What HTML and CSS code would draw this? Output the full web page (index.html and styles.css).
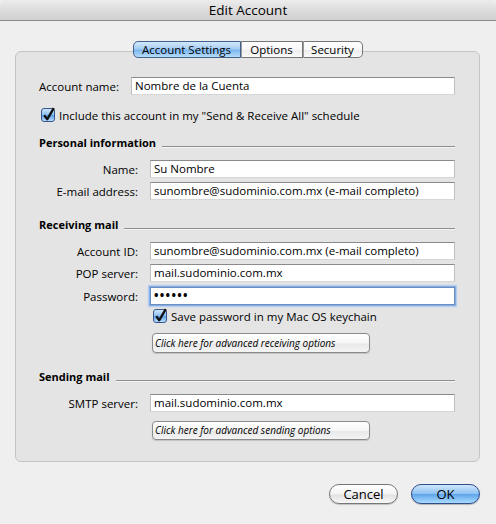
FILE: index.html
```html
<!DOCTYPE html>
<html>
<head>
<meta charset="utf-8">
<link rel="stylesheet" href="styles.css">
</head>
<body>
<div class="window">
  <div class="titlebar">Edit Account</div>
  <div class="content">
    <div class="tabs">
      <span class="tab tab-sel tab-first w1">Account Settings</span>
      <span class="tab w2">Options</span>
      <span class="tab tab-last w3">Security</span>
    </div>
    <div class="group">
      <div class="row">
        <span class="lbl lbl-narrow">Account name:</span>
        <span class="field">Nombre de la Cuenta</span>
      </div>
      <div class="check-row incl">
        <svg class="cb" width="14" height="14" viewBox="0 0 14 14"><defs><linearGradient id="cbg1" x1="0" y1="0" x2="0" y2="1"><stop offset="0" stop-color="#d4e9fc"/><stop offset=".48" stop-color="#8cbff0"/><stop offset=".52" stop-color="#5b9fe6"/><stop offset="1" stop-color="#c2e4ff"/></linearGradient></defs><rect x=".5" y=".5" width="13" height="13" rx="2.5" fill="url(#cbg1)" stroke="#34578f"/><path d="M3.2 7.2 L6.3 11.2 L12.8 0.2" fill="none" stroke="#111" stroke-width="2.3" stroke-linejoin="round"/></svg>
        <span>Include this account in my "Send &amp; Receive All" schedule</span>
      </div>
      <div class="heading h-personal"><span class="htext">Personal information</span><span class="rule"></span></div>
      <div class="row r-first">
        <span class="lbl">Name:</span>
        <span class="field">Su Nombre</span>
      </div>
      <div class="row r-next">
        <span class="lbl">E-mail address:</span>
        <span class="field">sunombre@sudominio.com.mx (e-mail completo)</span>
      </div>
      <div class="heading h-recv"><span class="htext">Receiving mail</span><span class="rule"></span></div>
      <div class="row r-first">
        <span class="lbl">Account ID:</span>
        <span class="field">sunombre@sudominio.com.mx (e-mail completo)</span>
      </div>
      <div class="row r-next">
        <span class="lbl">POP server:</span>
        <span class="field">mail.sudominio.com.mx</span>
      </div>
      <div class="row r-pass">
        <span class="lbl">Password:</span>
        <span class="field field-focus"><span class="dots">&#8226;&#8226;&#8226;&#8226;&#8226;&#8226;</span></span>
      </div>
      <div class="check-row save">
        <svg class="cb" width="14" height="14" viewBox="0 0 14 14"><defs><linearGradient id="cbg2" x1="0" y1="0" x2="0" y2="1"><stop offset="0" stop-color="#d4e9fc"/><stop offset=".48" stop-color="#8cbff0"/><stop offset=".52" stop-color="#5b9fe6"/><stop offset="1" stop-color="#c2e4ff"/></linearGradient></defs><rect x=".5" y=".5" width="13" height="13" rx="2.5" fill="url(#cbg2)" stroke="#34578f"/><path d="M3.2 7.2 L6.3 11.2 L12.8 0.2" fill="none" stroke="#111" stroke-width="2.3" stroke-linejoin="round"/></svg>
        <span>Save password in my Mac OS keychain</span>
      </div>
      <div class="adv adv-recv">Click here for advanced receiving options</div>
      <div class="heading h-send"><span class="htext">Sending mail</span><span class="rule"></span></div>
      <div class="row r-first">
        <span class="lbl">SMTP server:</span>
        <span class="field">mail.sudominio.com.mx</span>
      </div>
      <div class="adv adv-send">Click here for advanced sending options</div>
    </div>
    <div class="buttons">
      <span class="btn btn-cancel">Cancel</span>
      <span class="btn btn-ok">OK</span>
    </div>
  </div>
</div>
</body>
</html>
```
FILE: styles.css
```css
html, body {
  margin: 0;
  padding: 0;
}
body {
  width: 496px;
  height: 524px;
  background: #efefef;
  font-family: "Open Sans", "DejaVu Sans", sans-serif;
  font-size: 11.5px;
  color: #000;
  overflow: hidden;
}
.window {
  width: 496px;
  height: 524px;
  background: #efefef;
}
.titlebar {
  height: 20px;
  line-height: 20px;
  border-bottom: 1px solid #8c8c8c;
  background: linear-gradient(#ececec, #dadada 60%, #d0d0d0);
  text-align: center;
  font-size: 13.5px;
  border-radius: 5px 5px 0 0;
}
.content {
  padding: 20px 16px 0 15px;
}
.tabs {
  display: flex;
  justify-content: center;
  position: relative;
  z-index: 1;
  height: 17px;
}
.tab {
  box-sizing: border-box;
  height: 17px;
  line-height: 15px;
  text-align: center;
  border: 1px solid #767676;
  border-left: 1px solid #9a9a9a;
  background: linear-gradient(#ffffff, #f7f7f7 50%, #ececec 52%, #fafafa);
}
.tab-first {
  border-left: 1px solid #5a6a80;
  border-radius: 5px 0 0 5px;
}
.tab-last {
  border-radius: 0 5px 5px 0;
}
.tab-sel {
  border-color: #41618e;
  background: linear-gradient(#d3e8fb, #a3cdf4 48%, #78b4ee 52%, #b6dcfb);
}
.w1 { width: 108px; }
.w2 { width: 62px; }
.w3 { width: 60px; }
.group {
  margin-top: -7px;
  height: 411px;
  box-sizing: border-box;
  border: 1px solid #c4c4c4;
  border-radius: 6px;
  background: #e4e4e4;
  padding: 25px 24px 0 23px;
}
.row {
  display: flex;
  align-items: center;
  height: 18px;
}
.lbl {
  width: 99px;
  margin-right: 12px;
  text-align: right;
  flex: none;
}
.lbl-narrow {
  width: 80px;
}
.field {
  flex: 1;
  box-sizing: border-box;
  height: 18px;
  line-height: 16px;
  padding: 0 3px;
  background: #fff;
  border: 1px solid;
  border-color: #8a8a8a #c0c0c0 #d6d6d6 #c0c0c0;
  white-space: nowrap;
  overflow: hidden;
}
.field-focus {
  border-color: #6a8fbf;
  box-shadow: 0 0 0 1px #86aee2, 0 0 1px 2px #b5cff0;
}
.dots {
  font-size: 12px;
  letter-spacing: 1.3px;
  font-weight: bold;
}
.r-first { margin-top: 9px; }
.r-next { margin-top: 4px; }
.r-pass { margin-top: 5px; }
.check-row {
  display: flex;
  align-items: center;
  height: 16px;
}
.cb {
  flex: none;
  overflow: visible;
}
.incl {
  margin-top: 12px;
}
.incl .cb {
  margin-left: 2px;
  margin-right: 4px;
}
.save {
  margin-top: 3px;
}
.save .cb {
  margin-left: 114px;
  margin-right: 4px;
}
.heading {
  display: flex;
  height: 16px;
  line-height: 16px;
}
.htext {
  font-weight: bold;
  font-size: 11px;
  flex: none;
}
.rule {
  flex: 1;
  height: 1px;
  margin-top: 11px;
  margin-left: 6px;
  background: #8e8e8e;
  box-shadow: 0 1px 0 #f4f4f4;
}
.h-personal { margin-top: 12px; }
.h-recv { margin-top: 17px; }
.h-send { margin-top: 16px; }
.adv {
  box-sizing: border-box;
  width: 218px;
  height: 20px;
  line-height: 18px;
  margin-left: 113px;
  padding-left: 2px;
  font-style: italic;
  font-size: 10px;
  border: 1px solid #8a8a8a;
  border-radius: 4px;
  background: linear-gradient(#ffffff, #f6f6f6 50%, #e9e9e9 55%, #f4f4f4);
  box-shadow: 0 1px 1px rgba(0,0,0,0.15);
  white-space: nowrap;
}
.adv-recv { margin-top: 9px; }
.adv-send { margin-top: 9px; height: 19px; line-height: 17px; }
.buttons {
  display: flex;
  justify-content: flex-end;
  gap: 13px;
  margin-top: 22px;
}
.btn {
  box-sizing: border-box;
  width: 69px;
  height: 20px;
  line-height: 18px;
  border-radius: 10px;
  text-align: center;
  font-size: 13px;
}
.btn-cancel {
  border: 1px solid #777;
  background: linear-gradient(#ffffff, #f3f3f3 50%, #e2e2e2 55%, #f7f7f7);
  box-shadow: 0 1px 1px rgba(0,0,0,0.2);
}
.btn-ok {
  border: 1px solid #2f4c8c;
  background: linear-gradient(#cfe6fc, #8fc3f3 48%, #5ea5ec 52%, #a9dcfd);
  box-shadow: 0 1px 1px rgba(0,0,0,0.25);
}
```
